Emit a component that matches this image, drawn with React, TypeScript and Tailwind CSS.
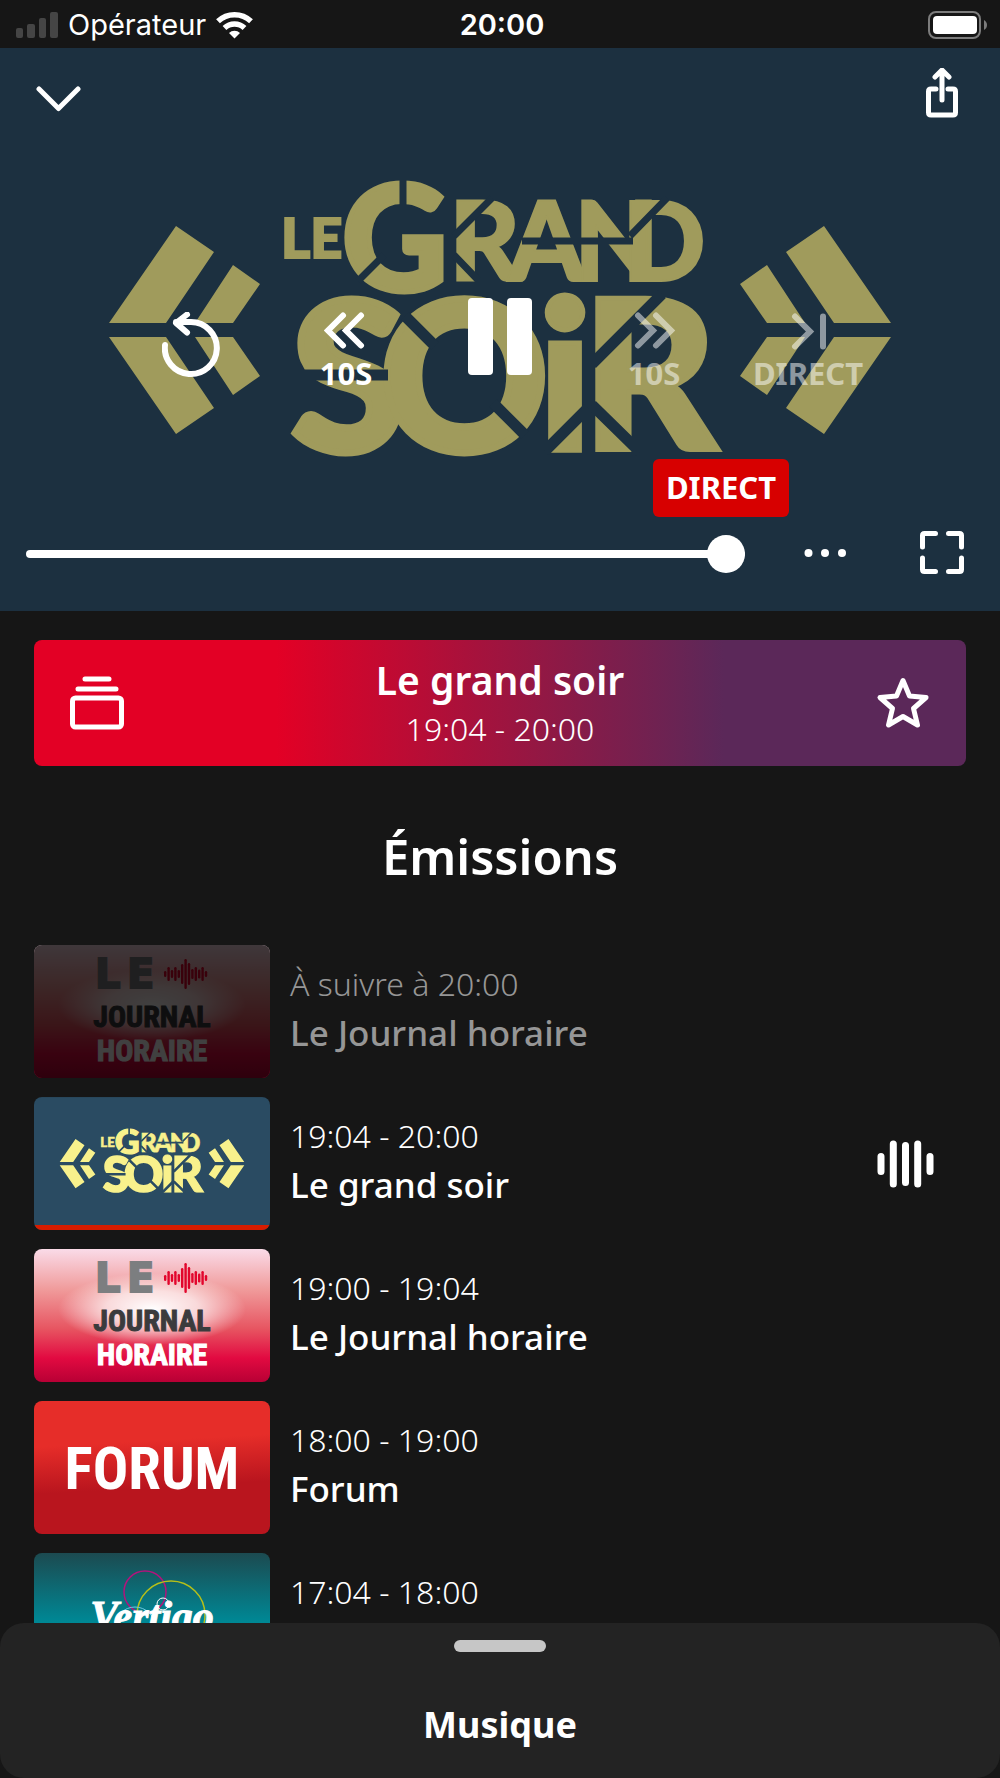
import type { ReactNode } from "react";

const arrow = "M109 275 176 178 214 204 166 275ZM195 275 233 217 260 236 233 275Z";

function GrandSoirArt({ ink, ground }: { ink: string; ground: string }) {
  return (
    <svg
      viewBox="0 0 1000 563"
      className="block h-full w-full"
      role="img"
      aria-label="Le Grand Soir"
    >
      <rect width="1000" height="563" fill={ground} />
      <g fill={ink}>
        <path d={arrow} />
        <path d={arrow} transform="translate(0 564) scale(1 -1)" />
        <path d={arrow} transform="translate(1000 0) scale(-1 1)" />
        <path d={arrow} transform="translate(1000 564) scale(-1 -1)" />
      </g>
      <g fill={ink} stroke={ink} strokeWidth="2" fontFamily="Lato, sans-serif" fontWeight="900">
        <text x="281" y="210" fontSize="56">LE</text>
        <text x="342" y="243" fontSize="146" strokeWidth="5">G</text>
        <text x="449" y="233" fontSize="110">R</text>
        <text x="508" y="233" fontSize="110">A</text>
        <text x="574" y="233" fontSize="110">N</text>
        <text x="622" y="233" fontSize="110">D</text>
        <text x="291" y="403" fontSize="208" strokeWidth="7">S</text>
        <text x="380" y="403" fontSize="208" strokeWidth="7">O</text>
        <text x="538" y="402" fontSize="208" strokeWidth="5">i</text>
        <text x="582" y="402" fontSize="208" strokeWidth="5">R</text>
      </g>
      <g stroke={ground} strokeWidth="7">
        <path d="M403 130V168M358 233 384 207M454 188 492 150M454 207 478 232M522 193H633M630 188 667 150" />
        <path d="M405 268 435 298M493 355 525 387M305 327H388" strokeWidth="11" />
        <path d="M545 403 588 360M592 316 662 246M592 357 640 404" strokeWidth="11" />
      </g>
    </svg>
  );
}

const waveBars = [6, 14, 8, 14, 8, 20, 30, 22, 10, 14, 9, 14, 6];

function JournalArt() {
  return (
    <svg viewBox="0 0 236 133" className="block h-full w-full" role="img" aria-label="Le Journal Horaire">
      <defs>
        <linearGradient id="journal-sky" x1="0" y1="0" x2="0" y2="1">
          <stop offset="0" stopColor="#fadbe8" />
          <stop offset=".3" stopColor="#f09c9c" />
          <stop offset=".6" stopColor="#e75561" />
          <stop offset=".82" stopColor="#e20a41" />
          <stop offset="1" stopColor="#b80035" />
        </linearGradient>
        <radialGradient id="journal-glow">
          <stop offset="0" stopColor="#fff" />
          <stop offset=".5" stopColor="#fff" stopOpacity=".7" />
          <stop offset="1" stopColor="#fff" stopOpacity="0" />
        </radialGradient>
      </defs>
      <rect width="236" height="133" fill="url(#journal-sky)" />
      <ellipse cx="118" cy="60" rx="94" ry="36" fill="url(#journal-glow)" />
      <g fontSize="40" fontWeight="700" fontFamily="'DejaVu Sans', sans-serif" fill="#7c7e80" stroke="#7c7e80" strokeWidth="2">
        <text x="61" y="43">L</text>
        <text x="93" y="43">E</text>
      </g>
      {waveBars.map((height, i) => (
        <rect key={i} x={130 + i * 3.4} y={29 - height / 2} width="2.4" height={height} rx="1.2" fill="#e2062c" />
      ))}
      <g fontFamily="'Roboto Condensed', Roboto, sans-serif" fontWeight="700" textAnchor="middle" fontSize="30">
        <text x="118" y="82" fill="#3b3b3d" stroke="#3b3b3d">JOURNAL</text>
        <text x="118" y="116" fill="#fff" stroke="#fff">HORAIRE</text>
      </g>
    </svg>
  );
}

function ForumArt() {
  return (
    <svg viewBox="0 0 236 133" className="block h-full w-full" role="img" aria-label="Forum">
      <defs>
        <linearGradient id="forum-red" x1=".45" y1="0" x2=".55" y2="1">
          <stop offset=".3" stopColor="#e62d29" />
          <stop offset=".65" stopColor="#b9151e" />
        </linearGradient>
      </defs>
      <rect width="236" height="133" fill="url(#forum-red)" />
      <text x="118" y="88" fontSize="59" fontWeight="700" textAnchor="middle" fontFamily="'Roboto Condensed', Roboto, sans-serif" fill="#fff">
        FORUM
      </text>
    </svg>
  );
}

function VertigoArt() {
  return (
    <svg viewBox="0 0 236 133" className="block h-full w-full" role="img" aria-label="Vertigo">
      <defs>
        <linearGradient id="vertigo-teal" x1="0" y1="0" x2="0" y2="1">
          <stop offset="0" stopColor="#1c4a50" />
          <stop offset=".5" stopColor="#008693" />
          <stop offset="1" stopColor="#00a0ae" />
        </linearGradient>
      </defs>
      <rect width="236" height="133" fill="url(#vertigo-teal)" />
      <g fill="none">
        <circle cx="111" cy="39" r="21" stroke="#b0147c" strokeWidth="1.5" />
        <circle cx="137" cy="62" r="34" stroke="#b5bf1a" strokeWidth="1.5" />
        <circle cx="101" cy="74" r="20" stroke="#6ec6e0" />
        <circle cx="129" cy="51" r="6" stroke="#fff" />
      </g>
      <text x="118" y="77" fontSize="42" fontWeight="700" fontStyle="italic" textAnchor="middle" fontFamily="'Liberation Serif', serif" fill="#fff" stroke="#fff">
        Vertigo
      </text>
    </svg>
  );
}

function StatusBar() {
  return (
    <header className="grid h-12 shrink-0 grid-cols-3 items-center pt-0.5 pr-3 pl-4 font-['Inter',sans-serif] text-[29px] leading-8">
      <div className="flex items-center gap-2.5">
        <svg width="42" height="26" viewBox="0 0 42 26" fill="#454545" aria-hidden="true">
          <rect y="16" width="7" height="10" rx="2" />
          <rect x="11" y="12" width="8" height="14" rx="2" />
          <rect x="23" y="6" width="7" height="20" rx="2" />
          <rect x="34" width="8" height="26" rx="2" />
        </svg>
        <span>Opérateur</span>
        <svg width="37" height="28" viewBox="0 0 37 28" fill="none" stroke="#fff" strokeWidth="5.5" aria-label="Wi-Fi">
          <path d="M2 10.200a24 24 0 0 1 33 0M8.500 17a14.500 14.500 0 0 1 20 0" />
          <path d="M18.500 27.500 13 22a8 8 0 0 1 11 0Z" fill="#fff" stroke="none" />
        </svg>
      </div>
      <span className="text-center font-semibold">20:00</span>
      <svg className="justify-self-end" width="60" height="28" viewBox="0 0 60 28" fill="none" aria-label="Batterie">
        <rect x="1" y="1" width="51" height="26" rx="7" stroke="#7c7c7c" strokeWidth="2" />
        <rect x="5" y="5" width="44" height="18" rx="4" fill="#fff" />
        <path d="M56 9c4 2 4 8 0 10Z" fill="#7c7c7c" />
      </svg>
    </header>
  );
}

function Control({ label, caption, dim, children }: { label: string; caption?: string; dim?: boolean; children: ReactNode }) {
  return (
    <button type="button" aria-label={label} disabled={dim} className="flex flex-col items-center pt-3.5 disabled:opacity-50">
      {children}
      {caption && <span className="mt-1 text-[31px] leading-[38px] font-bold">{caption}</span>}
    </button>
  );
}

function Player() {
  return (
    <section aria-label="Lecteur" className="relative shrink-0 bg-[#1c3040]">
      <div className="aspect-[1000/563]">
        <GrandSoirArt ink="#a09b5c" ground="#1c3040" />
      </div>
      <div className="absolute inset-0 flex flex-col">
        <div className="flex items-center justify-between pt-5 pr-10 pl-9">
          <button type="button" aria-label="Réduire" className="mt-2.5">
            <svg width="46" height="28" viewBox="0 0 46 28" fill="none" stroke="#fff" strokeWidth="5" strokeLinecap="round" strokeLinejoin="round">
              <path d="M3 4 22.500 23.500 42 4" />
            </svg>
          </button>
          <button type="button" aria-label="Partager">
            <svg width="36" height="52" viewBox="0 0 36 52" fill="none" stroke="#fff" strokeWidth="5" strokeLinecap="round" strokeLinejoin="round">
              <path d="M18 32V3M11 9l7-7 7 7M12 21H7q-2.500 0-2.500 2.500v21Q4.500 47 7 47h22q2.500 0 2.500-2.500v-21Q31.500 21 29 21h-5" />
            </svg>
          </button>
        </div>
        <div className="mx-auto mt-[178px] grid w-[77%] grid-cols-5 items-start">
          <Control label="Recommencer">
            <svg width="60" height="66" viewBox="0 0 60 66" fill="none" stroke="#fff" strokeWidth="6" strokeLinecap="round" strokeLinejoin="round">
              <path d="M3 33a26 26 0 1 0 26-23H14M25 2.500 14 11l11 9.500" />
            </svg>
          </Control>
          <Control label="Reculer de 10 secondes" caption="10S">
            <svg width="44" height="38" viewBox="0 0 44 38" fill="none" stroke="#fff" strokeWidth="6" strokeLinecap="round">
              <path d="M19 3.500 4 18.500l15 15M37 3.500l-15 15 15 15" />
            </svg>
          </Control>
          <button type="button" aria-label="Pause" className="flex justify-center gap-3.5">
            <span className="h-[77px] w-[25px] rounded bg-white" />
            <span className="h-[77px] w-[25px] rounded bg-white" />
          </button>
          <Control label="Avancer de 10 secondes" caption="10S" dim>
            <svg width="44" height="38" viewBox="0 0 44 38" fill="none" stroke="#fff" strokeWidth="6" strokeLinecap="round">
              <path d="m24 3.500 15 15-15 15M6 3.500l15 15-15 15" />
            </svg>
          </Control>
          <Control label="Aller au direct" caption="DIRECT" dim>
            <svg width="38" height="38" viewBox="0 0 38 38" fill="none" stroke="#fff" strokeWidth="6" strokeLinecap="round">
              <path d="m6 4.500 15 15-15 15M34 4.500v30" />
            </svg>
          </Control>
        </div>
        <div className="mt-auto flex items-center pr-[35px] pb-[34px] pl-[26px]">
          <div className="relative flex flex-1 items-center">
            <input
              type="range"
              aria-label="Position de lecture"
              min={0}
              max={100}
              defaultValue={100}
              className="h-2 w-full appearance-none rounded-full bg-white [&::-webkit-slider-thumb]:size-[38px] [&::-webkit-slider-thumb]:appearance-none [&::-webkit-slider-thumb]:rounded-full [&::-webkit-slider-thumb]:bg-white"
            />
            <output className="absolute -right-11 bottom-[41px] flex h-[58px] w-[136px] items-center justify-center rounded-md bg-[#d70000] pb-0.5 text-[31px] font-bold">
              DIRECT
            </output>
          </div>
          <button type="button" aria-label="Plus d’options" className="ml-[58px]">
            <svg width="44" height="12" viewBox="0 0 44 12" fill="#fff">
              <circle cx="5.500" cy="5" r="4" />
              <circle cx="22" cy="5" r="4" />
              <circle cx="39" cy="5" r="4" />
            </svg>
          </button>
          <button type="button" aria-label="Plein écran" className="ml-[72px]">
            <svg width="46" height="46" viewBox="0 0 46 46" fill="none" stroke="#fff" strokeWidth="5" strokeLinecap="round" strokeLinejoin="round">
              <path d="M16.500 2.500H5.500q-2 0-2 2V16M29.500 2.500h11q2 0 2 2V16M16.500 40.500H5.500q-2 0-2-2V27M29.500 40.500h11q2 0 2-2V27" />
            </svg>
          </button>
        </div>
      </div>
    </section>
  );
}

function CurrentShow() {
  return (
    <section className="mx-[34px] mt-[29px] flex shrink-0 items-center justify-between rounded-lg bg-linear-to-r/srgb from-[#e30025] from-26% to-[#5b2859] to-74% px-9 py-3.5">
      <button type="button" aria-label="Tous les épisodes">
        <svg width="54" height="54" viewBox="0 0 54 54" fill="none" stroke="#fff" strokeWidth="5" strokeLinecap="round">
          <path d="M15 3h24M8 13h38" />
          <rect x="2.500" y="22" width="49" height="29" rx="3" />
        </svg>
      </button>
      <div className="text-center">
        <h1 className="text-[39px] leading-[52px] font-semibold">Le grand soir</h1>
        <p className="text-[32px] leading-[46px] font-light">19:04 - 20:00</p>
      </div>
      <button type="button" aria-label="Ajouter aux favoris">
        <svg width="54" height="54" viewBox="0 0 54 54" fill="none" stroke="#fff" strokeWidth="5" strokeLinejoin="round">
          <path d="M27 4.500 33.500 20 50 21.500 37.500 32.500 41.500 49 27 40.500 12.500 49 16.500 32.500 4 21.500 20.500 20Z" />
        </svg>
      </button>
    </section>
  );
}

type Show = { time: string; title: string; art: ReactNode; state?: "next" | "live" };

const shows: Show[] = [
  { time: "À suivre à 20:00", title: "Le Journal horaire", art: <JournalArt />, state: "next" },
  { time: "19:04 - 20:00", title: "Le grand soir", art: <GrandSoirArt ink="#f8f18c" ground="#2a4b62" />, state: "live" },
  { time: "19:00 - 19:04", title: "Le Journal horaire", art: <JournalArt /> },
  { time: "18:00 - 19:00", title: "Forum", art: <ForumArt /> },
  { time: "17:04 - 18:00", title: "Vertigo", art: <VertigoArt /> },
];

function ShowRow({ time, title, art, state }: Show) {
  const next = state === "next";
  const live = state === "live";
  return (
    <li>
      <button type="button" disabled={next} className="flex w-full items-center gap-5 pr-8 text-left">
        <span className="relative block h-[133px] w-[236px] shrink-0 overflow-hidden rounded-lg">
          {art}
          {next && <span className="absolute inset-0 bg-black/75" />}
          {live && <span className="absolute inset-x-0 bottom-0 h-[5px] bg-[#d71c00]" />}
        </span>
        <span className={next ? "flex-1 pb-1 text-[#969696]" : "flex-1 pb-1"}>
          <span className="block text-[32px] leading-[46px] font-light">{time}</span>
          <span className="block text-[35px] leading-[52px] font-medium">{title}</span>
        </span>
        {live && (
          <svg width="57" height="48" viewBox="0 0 57 48" stroke="#fff" strokeWidth="7" strokeLinecap="round" aria-label="En cours">
            <path d="M4 16.500v15M16.300 4v40M28.500 5.500v37M40.700 4v40M53 16.500v15" />
          </svg>
        )}
      </button>
    </li>
  );
}

export default function App() {
  return (
    <main className="flex h-screen flex-col overflow-hidden bg-[#161616] font-['Noto_Sans',sans-serif] text-white">
      <StatusBar />
      <Player />
      <CurrentShow />
      <section className="flex min-h-0 flex-1 flex-col px-[34px]">
        <h2 className="mt-[55px] shrink-0 text-center text-[49px] leading-[70px] font-semibold">Émissions</h2>
        <ul className="mt-[54px] flex min-h-0 flex-1 flex-col gap-[19px] overflow-hidden">
          {shows.map((show) => (
            <ShowRow key={show.time} {...show} />
          ))}
        </ul>
      </section>
      <button type="button" className="flex h-[155px] shrink-0 flex-col items-center rounded-3xl bg-[#232323] pt-[17px]">
        <span className="h-3 w-[92px] rounded-full bg-[#c6c6c6]" />
        <span className="mt-[46px] text-[36px] leading-[54px] font-bold">Musique</span>
      </button>
    </main>
  );
}
